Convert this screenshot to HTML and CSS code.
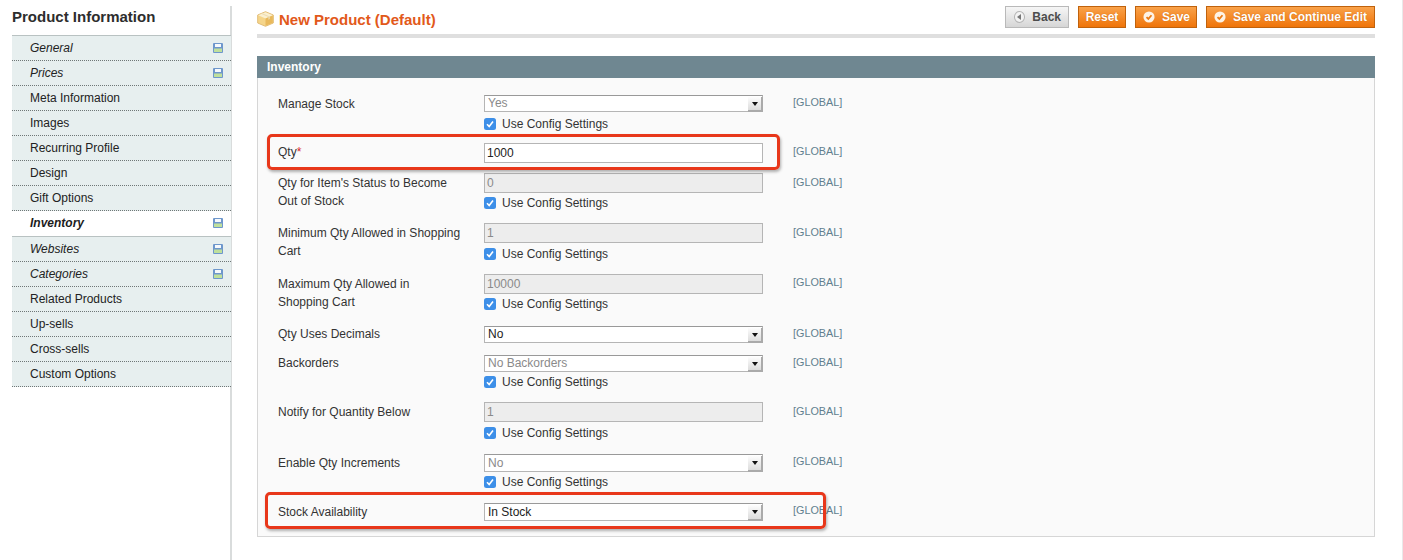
FILE: index.html
```html
<!DOCTYPE html>
<html lang="en">
<head>
<meta charset="utf-8">
<title>New Product (Default)</title>
<link rel="stylesheet" href="styles.css">
</head>
<body>
<svg class="defs" width="0" height="0" aria-hidden="true">
  <symbol id="save" viewBox="0 0 10 10">
    <rect width="10" height="10" rx="1" fill="#6e97cc"/>
    <rect x="2" y="1" width="6" height="3" fill="#f6f9fc"/>
    <rect x="1" y="5.5" width="8" height="3.5" fill="#bfe09c"/>
  </symbol>
  <symbol id="check" viewBox="0 0 13 13">
    <circle cx="6.5" cy="6.5" r="6" fill="#fdf3e6"/>
    <path d="M3.8 6.6l2 2 3.4-4" fill="none" stroke="#ea7a14" stroke-width="1.9"/>
  </symbol>
  <symbol id="tick" viewBox="0 0 12 12">
    <rect width="12" height="12" rx="2.5" fill="#3d8fe8"/>
    <path d="M3 6.2l2.2 2.3L9 3.6" fill="none" stroke="#fff" stroke-width="1.6"/>
  </symbol>
</svg>
<div class="page">
  <aside class="side">
    <h3 class="side-title">Product Information</h3>
    <ul class="tabs">
      <li class="tab changed">General<svg class="save"><use href="#save"/></svg></li>
      <li class="tab changed">Prices<svg class="save"><use href="#save"/></svg></li>
      <li class="tab">Meta Information</li>
      <li class="tab">Images</li>
      <li class="tab">Recurring Profile</li>
      <li class="tab">Design</li>
      <li class="tab">Gift Options</li>
      <li class="tab active">Inventory<svg class="save"><use href="#save"/></svg></li>
      <li class="tab changed">Websites<svg class="save"><use href="#save"/></svg></li>
      <li class="tab changed">Categories<svg class="save"><use href="#save"/></svg></li>
      <li class="tab">Related Products</li>
      <li class="tab">Up-sells</li>
      <li class="tab">Cross-sells</li>
      <li class="tab">Custom Options</li>
    </ul>
  </aside>
  <main class="main">
    <header class="head">
      <h2 class="title">
        <svg class="box" viewBox="0 0 17 16" aria-hidden="true">
          <path d="M8.5 .7L16.3 4v8l-7.8 3.3L.7 12V4z" fill="#f5d58a" stroke="#e2bd78" stroke-width="1" stroke-linejoin="round"/>
          <path d="M1.2 4.2l7.3 3.2 7.3-3.2L8.5 1.2z" fill="#fbf0cf"/>
          <path d="M8.5 7.6v7.2l7.3-3.1V4.4z" fill="#e9b95c"/>
          <path d="M4 2.8l7.4 3.3v2.6l1.4-.7V5.4L5.4 2.2z" fill="#ecdcb4"/>
        </svg>
        New Product (Default)
      </h2>
      <div class="actions">
        <button class="btn back"><span class="back-ico"></span>Back</button>
        <button class="btn btn-reset">Reset</button>
        <button class="btn btn-save"><svg class="chk"><use href="#check"/></svg>Save</button>
        <button class="btn btn-cont"><svg class="chk"><use href="#check"/></svg>Save and Continue Edit</button>
      </div>
    </header>
    <section class="panel">
      <h4 class="panel-head">Inventory</h4>
      <form class="form">
        <div class="row r-a">
          <label class="lbl">Manage Stock</label>
          <div class="ctl">
            <div class="sel"><select class="dis" disabled><option>Yes</option></select><span class="arrow"></span></div>
            <label class="cfg far"><svg class="tick"><use href="#tick"/></svg>Use Config Settings</label>
          </div>
          <span class="scope">[GLOBAL]</span>
        </div>
        <div class="row">
          <label class="lbl">Qty<span class="req">*</span></label>
          <div class="ctl"><input class="txt" value="1000"></div>
          <span class="scope">[GLOBAL]</span>
        </div>
        <div class="row r-c">
          <label class="lbl">Qty for Item's Status to Become Out of Stock</label>
          <div class="ctl">
            <input class="txt off" value="0" disabled>
            <label class="cfg near"><svg class="tick"><use href="#tick"/></svg>Use Config Settings</label>
          </div>
          <span class="scope">[GLOBAL]</span>
        </div>
        <div class="row r-c">
          <label class="lbl">Minimum Qty Allowed in Shopping Cart</label>
          <div class="ctl">
            <input class="txt off" value="1" disabled>
            <label class="cfg"><svg class="tick"><use href="#tick"/></svg>Use Config Settings</label>
          </div>
          <span class="scope">[GLOBAL]</span>
        </div>
        <div class="row r-d">
          <label class="lbl">Maximum Qty Allowed in Shopping Cart</label>
          <div class="ctl">
            <input class="txt off" value="10000" disabled>
            <label class="cfg near"><svg class="tick"><use href="#tick"/></svg>Use Config Settings</label>
          </div>
          <span class="scope">[GLOBAL]</span>
        </div>
        <div class="row r-e">
          <label class="lbl">Qty Uses Decimals</label>
          <div class="ctl"><div class="sel"><select><option>No</option></select><span class="arrow"></span></div></div>
          <span class="scope">[GLOBAL]</span>
        </div>
        <div class="row r-e">
          <label class="lbl">Backorders</label>
          <div class="ctl">
            <div class="sel"><select class="dis" disabled><option>No Backorders</option></select><span class="arrow"></span></div>
            <label class="cfg near"><svg class="tick"><use href="#tick"/></svg>Use Config Settings</label>
          </div>
          <span class="scope">[GLOBAL]</span>
        </div>
        <div class="row r-c">
          <label class="lbl">Notify for Quantity Below</label>
          <div class="ctl">
            <input class="txt off" value="1" disabled>
            <label class="cfg"><svg class="tick"><use href="#tick"/></svg>Use Config Settings</label>
          </div>
          <span class="scope">[GLOBAL]</span>
        </div>
        <div class="row r-a">
          <label class="lbl">Enable Qty Increments</label>
          <div class="ctl">
            <div class="sel tall"><select class="dis" disabled><option>No</option></select><span class="arrow"></span></div>
            <label class="cfg near"><svg class="tick"><use href="#tick"/></svg>Use Config Settings</label>
          </div>
          <span class="scope">[GLOBAL]</span>
        </div>
        <div class="row r-a">
          <label class="lbl">Stock Availability</label>
          <div class="ctl"><div class="sel tall"><select><option>In Stock</option></select><span class="arrow"></span></div></div>
          <span class="scope">[GLOBAL]</span>
        </div>
        <div class="mark mark-qty"></div>
        <div class="mark mark-stock"></div>
      </form>
    </section>
  </main>
</div>
</body>
</html>
```
FILE: styles.css
```css
* { box-sizing: border-box; }
html, body { margin: 0; height: 560px; overflow: hidden; background: #fff; }
body { font: 12px/18px "Liberation Sans", Arial, sans-serif; color: #2f2f2f; }
.defs { position: absolute; }
.page { display: flex; height: 560px; border-right: 1px solid #e9e9e9; }

.side { width: 232px; margin-top: 6px; padding-left: 12px; border-right: 2px solid #d9dcdc; flex: none; }
.side-title { margin: 0; height: 23px; padding-top: 2px; font-size: 15px; line-height: 18px; font-weight: bold; color: #2d2d2d; }
.tabs { list-style: none; margin: 6px -1px 0 0; padding: 0; width: 219px; border-top: 1px solid #b9c2c2; }
.tab { display: flex; align-items: center; justify-content: space-between; height: 25px; padding: 0 8px 0 18px; background: #e7efef; border-bottom: 1px dotted #6f7777; color: #222; }
.tab.changed { font-style: italic; }
.tab.active { height: 26px; padding-bottom: 2px; background: #fff; border-bottom: 1px solid #b9c2c2; font-style: italic; font-weight: bold; color: #1c1c1c; }
.save { width: 10px; height: 10px; }

.main { width: 1143px; padding-left: 25px; flex: none; }
.head { display: flex; align-items: flex-start; justify-content: space-between; height: 38px; padding-top: 6px; border-bottom: 4px solid #dfdfdf; }
.title { display: flex; align-items: center; gap: 5px; margin: 0; height: 28px; font-size: 15px; font-weight: bold; color: #e2591a; }
.box { width: 17px; height: 16px; margin-top: -2px; }
.actions { display: flex; gap: 9px; }
.btn { display: flex; align-items: center; height: 22px; padding: 0 7px; border: 1px solid #c0620c; background: linear-gradient(#f9a24a, #ef7409); color: #fff; font: bold 12px/18px "Liberation Sans", Arial, sans-serif; text-shadow: 0 0 1px #c25f0a; white-space: nowrap; }
.btn-reset { width: 48px; justify-content: center; }
.btn-save { width: 62px; }
.btn-cont { width: 169px; }
.btn.back { width: 64px; border-color: #b9b9b9; background: linear-gradient(#f6f6f6, #d6d6d6); color: #4c4c4c; text-shadow: none; }
.chk { width: 12px; height: 12px; margin-right: 7px; flex: none; }
.back-ico { position: relative; width: 12px; height: 12px; margin: 0 7px 0 1px; border: 1px solid #b4b4b4; border-radius: 50%; background: #f3f3f3; }
.back-ico::after { content: ""; position: absolute; left: 2px; top: 2px; border: 3px solid transparent; border-left-width: 0; border-right: 4px solid #777; }

.panel { margin-top: 18px; width: 1118px; }
.panel-head { margin: 0; height: 22px; padding: 2px 10px; background: #6f8791; color: #fff; font-size: 12px; line-height: 18px; font-weight: bold; }
.form { position: relative; display: grid; grid-template-rows: 48px 30px 50px 51px 52px 29px 47px 52px 49px 1fr; height: 459px; padding: 17px 0 0 20px; background: #fafafa; border: 1px solid #d6d6d6; border-top: 0; }
.row { --l: 0px; --s: 0px; display: grid; grid-template-columns: 206px 279px 1fr; align-items: start; }
.r-a { --l: 0px; --s: -1px; }
.r-c { --l: 1px; --s: 1px; }
.r-d { --l: 1px; --s: 0px; }
.r-e { --l: -1px; --s: -1px; }
.lbl { width: 185px; margin-top: var(--l); line-height: 18px; color: #333; }
.req { color: #d8262c; }
.ctl { display: flex; flex-direction: column; align-items: flex-start; }
.scope { margin-top: var(--s); padding-left: 30px; font-size: 10.8px; line-height: 16px; color: #607e8e; }

.sel { position: relative; width: 279px; height: 17px; }
.sel.tall { height: 18px; }
.sel select { display: block; width: 100%; height: 100%; padding: 0 0 0 3px; border: 1px solid #b5b5b5; border-top-color: #999; border-radius: 0; background: #fff; color: #222; font: 12px/15px "Liberation Sans", Arial, sans-serif; appearance: none; opacity: 1; }
.sel select.dis { color: #8a8a8a; }
.arrow { position: absolute; right: 0; top: 2px; bottom: 0; width: 15px; background: linear-gradient(#fdfdfd, #dcdcdc); border-right: 2px solid #aaa; border-bottom: 2px solid #aaa; }
.arrow::after { content: ""; position: absolute; left: 4px; top: 5px; border: 3px solid transparent; border-bottom-width: 0; border-top: 4px solid #111; }

.txt { display: block; width: 279px; height: 20px; padding: 0 2px; border: 1px solid #b5b5b5; border-radius: 0; background: #fff; color: #222; font: 12px/18px "Liberation Sans", Arial, sans-serif; outline: 0; }
.txt.off { background: #ededed; color: #8a8a8a; opacity: 1; }
.cfg { display: flex; align-items: center; gap: 6px; height: 18px; margin-top: 2px; color: #333; }
.cfg.near { margin-top: 1px; }
.cfg.far { margin-top: 3px; }
.tick { width: 12px; height: 12px; }

.mark { position: absolute; border: 3px solid #e8371a; border-radius: 5px; box-shadow: 1px 2px 3px rgba(0,0,0,.3); pointer-events: none; }
.mark-qty { left: 9px; top: 56px; width: 513px; height: 36px; }
.mark-stock { left: 7px; top: 414px; width: 561px; height: 37px; }
```
